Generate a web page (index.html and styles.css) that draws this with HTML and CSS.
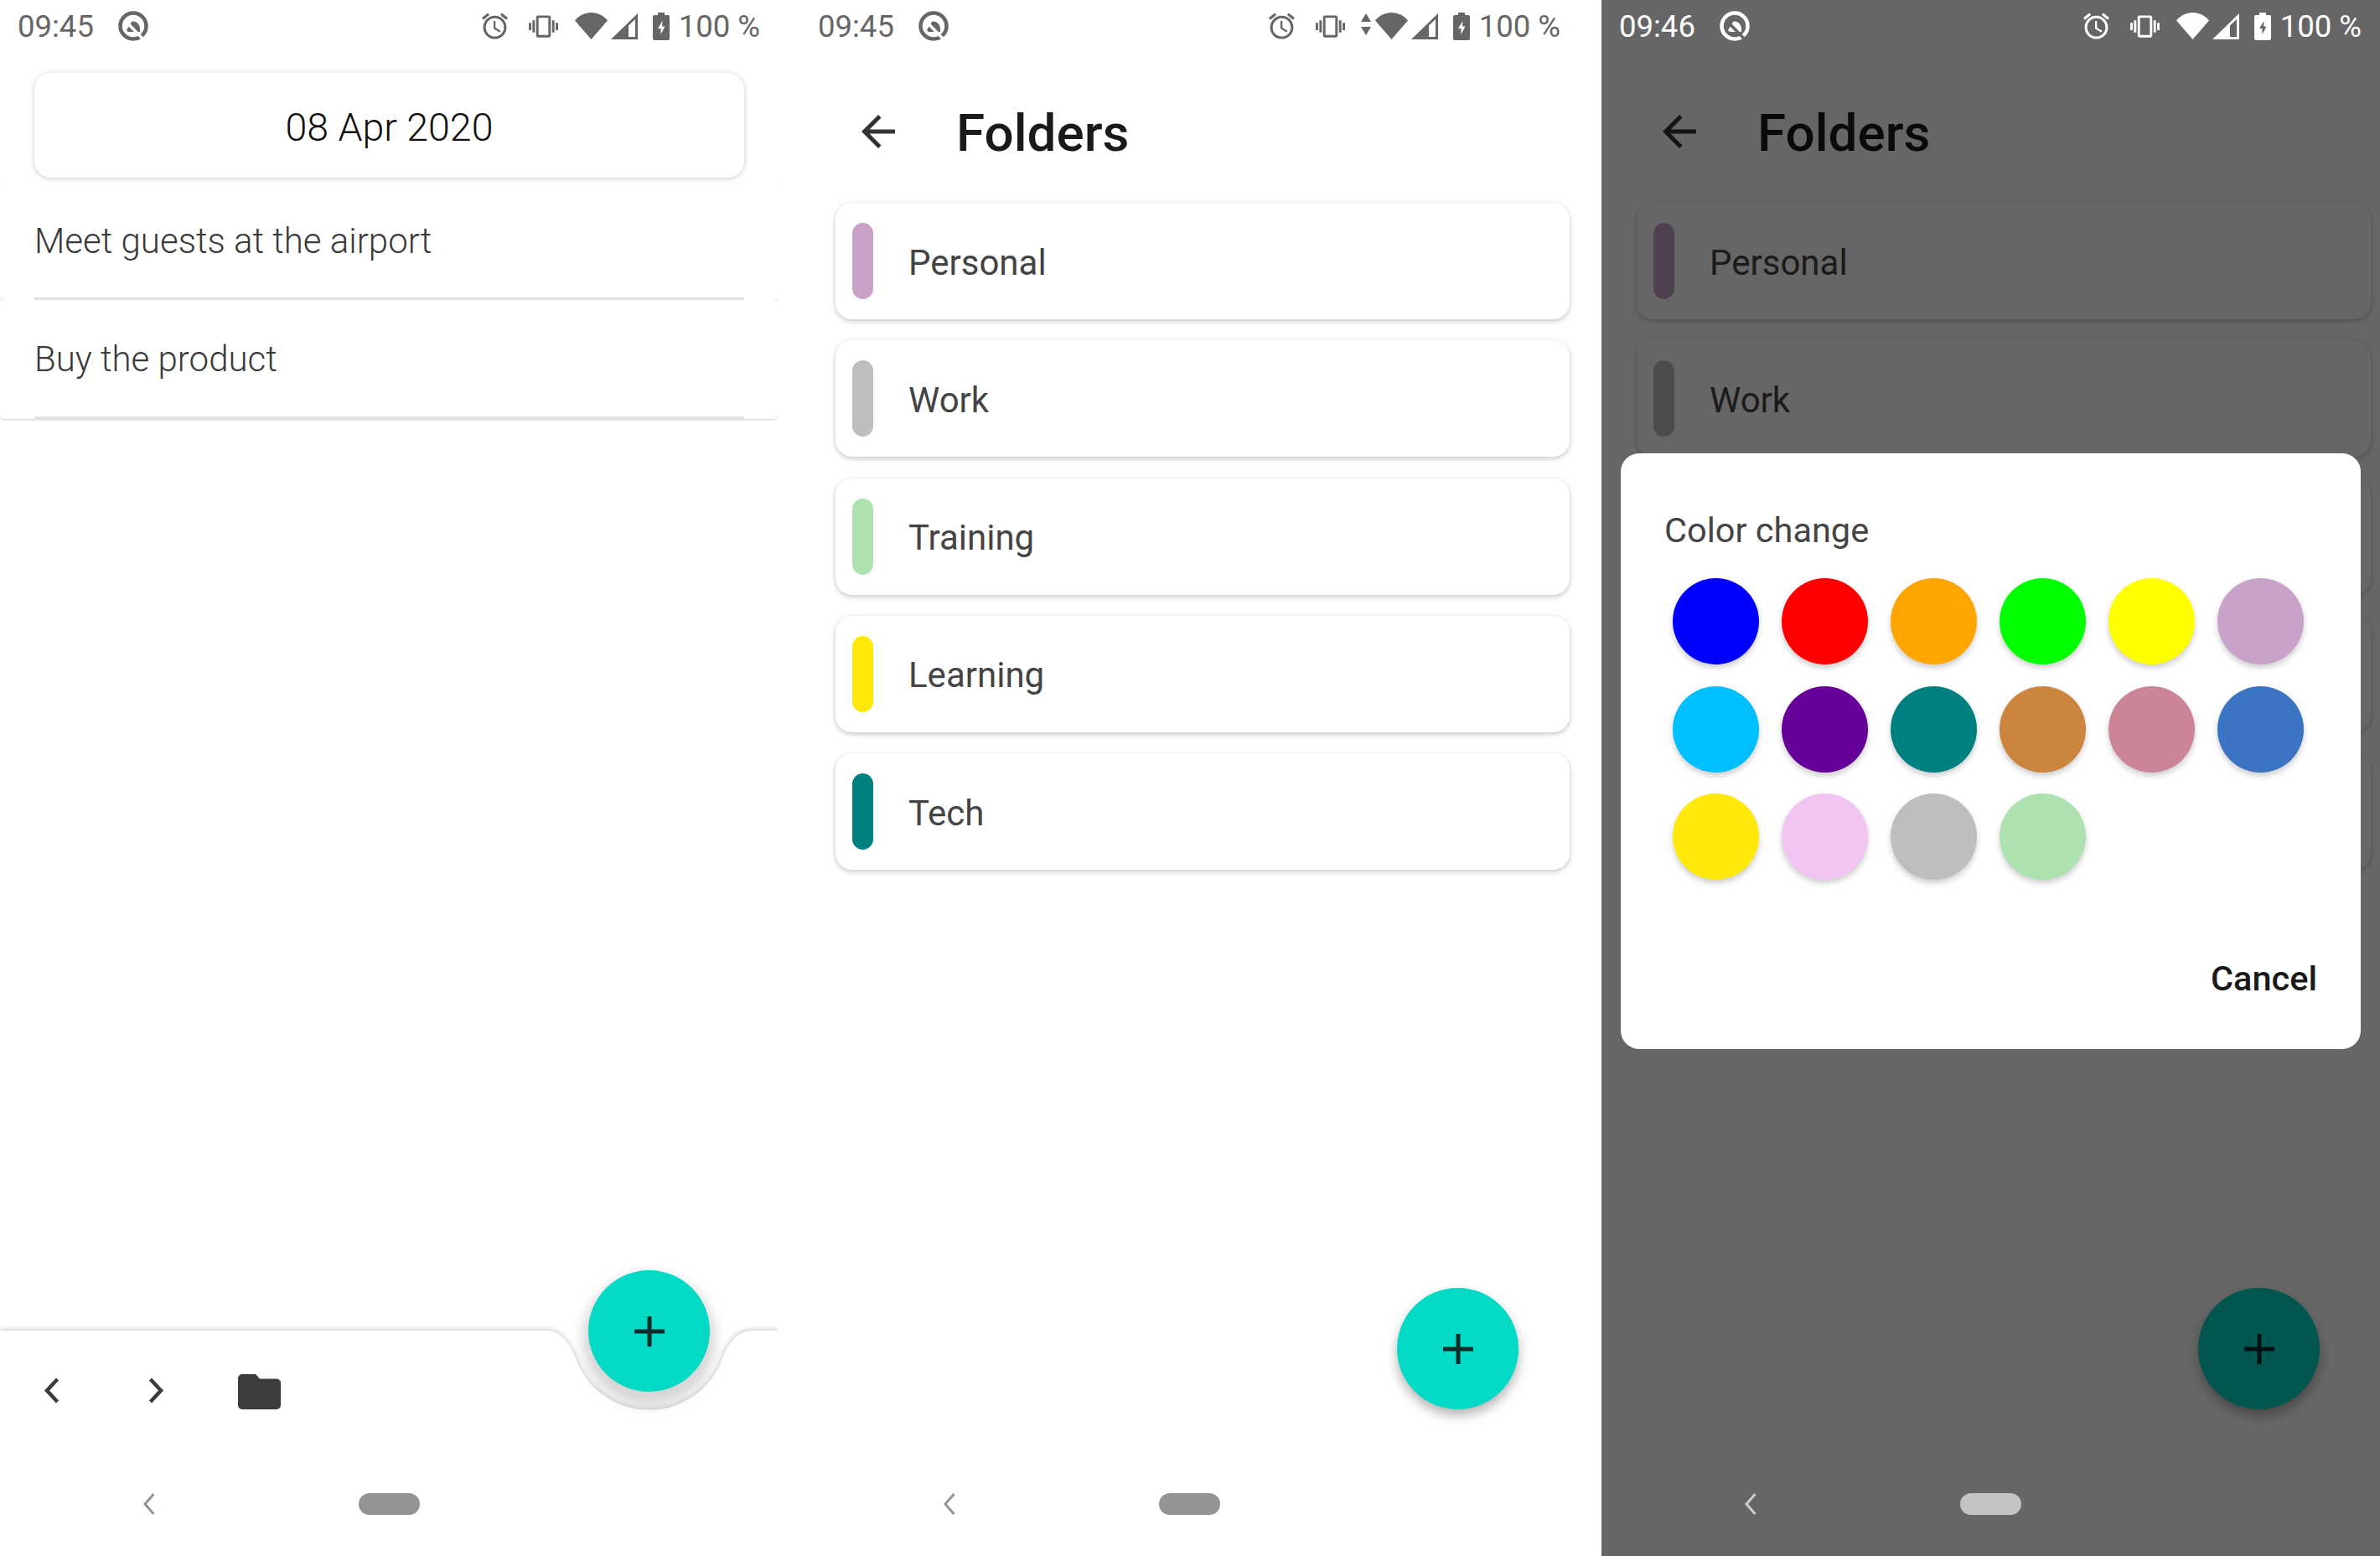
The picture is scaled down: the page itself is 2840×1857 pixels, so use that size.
FILE: index.html
```html
<!doctype html>
<html lang="en-US">
<head>
	<meta charset="utf-8">
	<title>Notes screens</title>
	<link rel="stylesheet" href="styles.css">
</head>
<body>
	<svg class="defs" width="0" height="0">
		<symbol id="i-q" viewBox="0 0 36 36">
			<circle cx="18" cy="18" r="15.500" fill="none" stroke="currentColor" stroke-width="4.500"/>
			<path d="M10 23L16.500 12.500C21.500 12 25.500 15.500 26 21L26 25L12 25Z" fill="currentColor"/>
			<path d="M13 16.500L31 35" fill="none" stroke="var(--cut)" stroke-width="3.500"/>
		</symbol>
		<symbol id="i-alarm" viewBox="2 1.860 20 20.140">
			<path d="M22 5.720l-4.600-3.860-1.290 1.530 4.600 3.860L22 5.720zM7.880 3.390L6.600 1.860 2 5.710l1.290 1.530 4.590-3.850zM12.500 8H11v6l4.750 2.850.75-1.230-4-2.370V8zM12 4c-4.970 0-9 4.030-9 9s4.030 9 9 9 9-4.030 9-9-4.030-9-9-9zm0 16c-3.870 0-7-3.130-7-7s3.130-7 7-7 7 3.130 7 7-3.130 7-7 7z" fill="currentColor"/>
		</symbol>
		<symbol id="i-vibrate" viewBox="0 3 24 18">
			<path d="M0 15h2V9H0v6zm3 2h2V7H3v10zm19-8v6h2V9h-2zm-3 8h2V7h-2v10zM16.500 3h-9C6.670 3 6 3.670 6 4.500v15c0 .83.67 1.500 1.500 1.500h9c.83 0 1.500-.67 1.500-1.500v-15c0-.83-.67-1.500-1.500-1.500zM16 19H8V5h8v14z" fill="currentColor"/>
		</symbol>
		<symbol id="i-data" viewBox="0 0 12 26">
			<path d="M6 0L12 10H0ZM0 16H12L6 26Z" fill="currentColor"/>
		</symbol>
		<symbol id="i-wifi" viewBox="0 0 39 32">
			<path d="M19.500 32L0 9.500C5 3.500 12 0 19.500 0S34 3.500 39 9.500Z" fill="currentColor"/>
		</symbol>
		<symbol id="i-signal" viewBox="0 0 32 31">
			<path fill-rule="evenodd" d="M0 31L32 0V31ZM21 28H29V7L21 14.500Z" fill="currentColor"/>
		</symbol>
		<symbol id="i-battery" viewBox="0 0 20 33">
			<path fill-rule="evenodd" d="M6 0h8v3h4a2 2 0 0 1 2 2v26a2 2 0 0 1-2 2H2a2 2 0 0 1-2-2V5a2 2 0 0 1 2-2h4zM11.500 10L6 19H9.500V26L14.500 16.500H11Z" fill="currentColor"/>
		</symbol>
		<symbol id="i-plus" viewBox="0 0 36 36">
			<path d="M15.500 0h5v15.500H36v5H20.500V36h-5V20.500H0v-5h15.500z" fill="currentColor"/>
		</symbol>
		<symbol id="i-nav-back" viewBox="0 0 14 26">
			<path d="M12.500 1L2 13L12.500 25" fill="none" stroke="currentColor" stroke-width="3"/>
		</symbol>
	</svg>

	<div class="page">
		<!-- day view -->
		<section class="screen">
			<div class="status">
				<span class="time">09:45</span>
				<svg class="ic-q"><use href="#i-q"/></svg>
				<div class="status-right">
					<svg class="ic-alarm"><use href="#i-alarm"/></svg>
					<svg class="ic-vibrate"><use href="#i-vibrate"/></svg>
					<svg class="ic-wifi"><use href="#i-wifi"/></svg>
					<svg class="ic-signal"><use href="#i-signal"/></svg>
					<svg class="ic-battery"><use href="#i-battery"/></svg>
					<span class="level">100 %</span>
				</div>
			</div>
			<div class="date">08 Apr 2020</div>
			<ul class="tasks">
				<li><span>Meet guests at the airport</span></li>
				<li><span>Buy the product</span></li>
			</ul>
			<div class="bar">
				<svg class="bar-shape" width="929" height="145" viewBox="0 0 929 145">
					<path d="M0 0H652C668 0 680 14 687 33A93 93 0 0 0 862 33C869 14 881 0 897 0H929V300H0Z" fill="#fff"/>
				</svg>
				<div class="bar-icons">
					<svg class="ic-prev" viewBox="0 0 19 31"><path d="M16.500 2L4 15.500L16.500 29" fill="none" stroke="currentColor" stroke-width="4.500"/></svg>
					<svg class="ic-next" viewBox="0 0 19 31"><path d="M2.500 2L15 15.500L2.500 29" fill="none" stroke="currentColor" stroke-width="4.500"/></svg>
					<svg class="ic-folder" viewBox="0 0 51 42"><path d="M5 0H21L26 5.500H46a5 5 0 0 1 5 5V37a5 5 0 0 1-5 5H5a5 5 0 0 1-5-5V5a5 5 0 0 1 5-5z" fill="currentColor"/></svg>
				</div>
				<button class="fab fab-docked"><svg class="ic-plus"><use href="#i-plus"/></svg></button>
			</div>
			<div class="nav">
				<svg class="ic-nav-back"><use href="#i-nav-back"/></svg>
				<span class="pill"></span>
			</div>
		</section>

		<!-- folders -->
		<section class="screen">
			<div class="status">
				<span class="time">09:45</span>
				<svg class="ic-q"><use href="#i-q"/></svg>
				<div class="status-right">
					<svg class="ic-alarm"><use href="#i-alarm"/></svg>
					<svg class="ic-vibrate"><use href="#i-vibrate"/></svg>
					<svg class="ic-data"><use href="#i-data"/></svg>
					<svg class="ic-wifi ic-wifi-near"><use href="#i-wifi"/></svg>
					<svg class="ic-signal"><use href="#i-signal"/></svg>
					<svg class="ic-battery"><use href="#i-battery"/></svg>
					<span class="level">100 %</span>
				</div>
			</div>
			<div class="head">
				<svg class="ic-back" viewBox="4 4 16 16"><path d="M20 11H7.830l5.590-5.590L12 4l-8 8 8 8 1.410-1.410L7.830 13H20v-2z" fill="currentColor"/></svg>
				<h1>Folders</h1>
			</div>
			<ul class="folders">
				<li><i class="mark c-lilac"></i>Personal</li>
				<li><i class="mark c-grey"></i>Work</li>
				<li><i class="mark c-mint"></i>Training</li>
				<li><i class="mark c-gold"></i>Learning</li>
				<li><i class="mark c-teal"></i>Tech</li>
			</ul>
			<button class="fab fab-float"><svg class="ic-plus"><use href="#i-plus"/></svg></button>
			<div class="nav">
				<svg class="ic-nav-back"><use href="#i-nav-back"/></svg>
				<span class="pill"></span>
			</div>
		</section>

		<!-- folders with the colour dialog open -->
		<section class="screen dimmed">
			<div class="status">
				<span class="time">09:46</span>
				<svg class="ic-q"><use href="#i-q"/></svg>
				<div class="status-right">
					<svg class="ic-alarm"><use href="#i-alarm"/></svg>
					<svg class="ic-vibrate"><use href="#i-vibrate"/></svg>
					<svg class="ic-wifi"><use href="#i-wifi"/></svg>
					<svg class="ic-signal"><use href="#i-signal"/></svg>
					<svg class="ic-battery"><use href="#i-battery"/></svg>
					<span class="level">100 %</span>
				</div>
			</div>
			<div class="head">
				<svg class="ic-back" viewBox="4 4 16 16"><path d="M20 11H7.830l5.590-5.590L12 4l-8 8 8 8 1.410-1.410L7.830 13H20v-2z" fill="currentColor"/></svg>
				<h1>Folders</h1>
			</div>
			<ul class="folders">
				<li><i class="mark c-lilac"></i>Personal</li>
				<li><i class="mark c-grey"></i>Work</li>
				<li><i class="mark c-mint"></i>Training</li>
				<li><i class="mark c-gold"></i>Learning</li>
				<li><i class="mark c-teal"></i>Tech</li>
			</ul>
			<button class="fab fab-float"><svg class="ic-plus"><use href="#i-plus"/></svg></button>
			<div class="nav">
				<svg class="ic-nav-back"><use href="#i-nav-back"/></svg>
				<span class="pill"></span>
			</div>
			<div class="scrim"></div>
			<div class="dialog">
				<h2>Color change</h2>
				<div class="swatches">
					<i class="c-blue"></i><i class="c-red"></i><i class="c-orange"></i><i class="c-green"></i><i class="c-yellow"></i><i class="c-lilac"></i>
					<i class="c-sky"></i><i class="c-purple"></i><i class="c-teal"></i><i class="c-copper"></i><i class="c-rose"></i><i class="c-steel"></i>
					<i class="c-gold"></i><i class="c-pink"></i><i class="c-grey"></i><i class="c-mint"></i>
				</div>
				<button class="cancel">Cancel</button>
			</div>
		</section>
	</div>
</body>
</html>
```

FILE: styles.css
```css
body{margin:0;background:#fff;font-family:Roboto,"Liberation Sans",sans-serif;color:#444}
ul{margin:0;padding:0;list-style:none}
button{margin:0;padding:0;border:0;background:none;font:inherit}
.defs{position:absolute}
svg{display:block;flex:none}

.page{display:grid;grid-template-columns:955px 956px 929px;width:2840px;height:1857px;overflow:hidden}
.screen{position:relative;display:flex;flex-direction:column;width:929px;height:1857px;overflow:hidden;background:#fff;--cut:#fff}

/* status bar */
.status{display:flex;align-items:center;flex:none;height:62px;padding:0 22px 0 21px;font-size:36.500px;color:#666}
.time{line-height:63px}
.ic-q{width:36px;height:36px;margin-left:29px}
.status-right{display:flex;align-items:center;margin-left:auto}
.ic-alarm{width:31px;height:32px}
.ic-vibrate{width:35px;height:27px;margin-left:25px}
.ic-data{width:12px;height:26px;margin:-4px 0 0 19px}
.ic-wifi{width:39px;height:32px;margin-left:20px}
.ic-wifi-near{margin-left:5px}
.ic-signal{width:32px;height:31px;margin-left:4px}
.ic-battery{width:20px;height:33px;margin-left:18px}
.level{margin-left:11px;line-height:63px}

/* day view */
.date{flex:none;height:125px;margin:25px 41px 0;border-radius:20px;box-shadow:0 1px 6px rgba(0,0,0,.22);font-size:46.500px;font-weight:300;line-height:131px;text-align:center;color:#111}
.tasks{margin-top:5px;font-size:42px;font-weight:300;color:#3a3a3a}
.tasks li{height:141px;padding:0 41px;border-radius:6px;box-shadow:0 2px 3px -1px rgba(0,0,0,.2);box-sizing:border-box;background:#fff}
.tasks li+li{height:142px}
.tasks span{display:block;height:100%;border-bottom:3px solid #e2e2e2;box-sizing:border-box;line-height:142px}

/* bottom app bar, the shape is cut around the fab */
.bar{position:relative;flex:none;height:145px;margin-top:auto;color:#3c3c3c}
.bar-shape{position:absolute;left:0;top:0;overflow:visible;filter:drop-shadow(0 -1px 3px rgba(0,0,0,.24))}
.bar-icons{position:relative;display:flex;align-items:center;height:42px;padding:52px 0 0 52px}
.ic-prev,.ic-next{width:19px;height:31px;margin-top:-3px}
.ic-next{margin-left:106px}
.ic-folder{width:51px;height:42px;margin-left:88px}

.fab{display:flex;align-items:center;justify-content:center;width:145px;height:145px;border-radius:50%;background:#03dac5;color:#0d2b29}
.fab-docked{position:absolute;left:702px;top:-72px;box-shadow:0 10px 14px 7px rgba(0,0,0,.16)}
.fab-float{position:absolute;left:712px;top:1537px;box-shadow:0 7px 14px rgba(0,0,0,.3)}
.ic-plus{width:36px;height:36px}

/* system navigation */
.nav{position:relative;display:flex;align-items:center;flex:none;height:124px;padding-left:171px;color:#949494}
.ic-nav-back{width:14px;height:26px}
.pill{width:73px;height:26px;margin-left:243px;border-radius:13px;background:#949494}
.screen>.head~.nav{margin-top:auto}

/* folders */
.head{display:flex;align-items:center;flex:none;height:180px;padding:10px 0 0 73px;box-sizing:border-box;color:#1a1a1a}
.ic-back{width:40px;height:40px;color:#333}
.head h1{margin:0 0 0 73px;padding-top:3px;font-size:62px;font-weight:500;line-height:1}
.folders{display:flex;flex-direction:column;gap:25.250px;padding:0 11px 0 42px;font-size:42px}
.folders li{display:flex;align-items:center;height:139px;padding:3px 0 0 20px;border-radius:20px;box-sizing:border-box;background:#fff;box-shadow:0 2px 6px rgba(0,0,0,.24)}
.mark{width:25px;height:91px;margin:0 42px 3px 0;border-radius:13px}

/* dialog */
.dimmed{--cut:#666}
.scrim{position:absolute;inset:0;background:rgba(0,0,0,.6)}
.dimmed .status,.dimmed .nav{z-index:1}
.dimmed .status{color:#fff}
.dimmed .nav{color:#ccc}
.dimmed .pill{background:#c4c4c4}
.dialog{position:absolute;left:23px;top:541px;display:flex;flex-direction:column;width:883px;height:711px;padding:68px 52px 60px;border-radius:22px;box-sizing:border-box;background:#fff}
.dialog h2{margin:0;font-size:41.500px;font-weight:400;line-height:47px}
.swatches{display:grid;grid-template-columns:repeat(6,103px);gap:25.500px 27px;margin:34px 0 0 10px}
.swatches i{width:103px;height:103px;border-radius:50%;box-shadow:0 4px 7px rgba(0,0,0,.2)}
.cancel{align-self:flex-end;margin-top:auto;font-size:41.500px;font-weight:500;line-height:48px;color:#1a1a1a}

.c-blue{background:#00f}
.c-red{background:#f00}
.c-orange{background:#ffa500}
.c-green{background:#0f0}
.c-yellow{background:#ff0}
.c-lilac{background:#c8a2c8}
.c-sky{background:#00bfff}
.c-purple{background:#609}
.c-teal{background:#008080}
.c-copper{background:#cb853f}
.c-rose{background:#cb8597}
.c-steel{background:#3a74c3}
.c-gold{background:#ffe90c}
.c-pink{background:#f2c4f2}
.c-grey{background:#bebebe}
.c-mint{background:#ade1af}
```
